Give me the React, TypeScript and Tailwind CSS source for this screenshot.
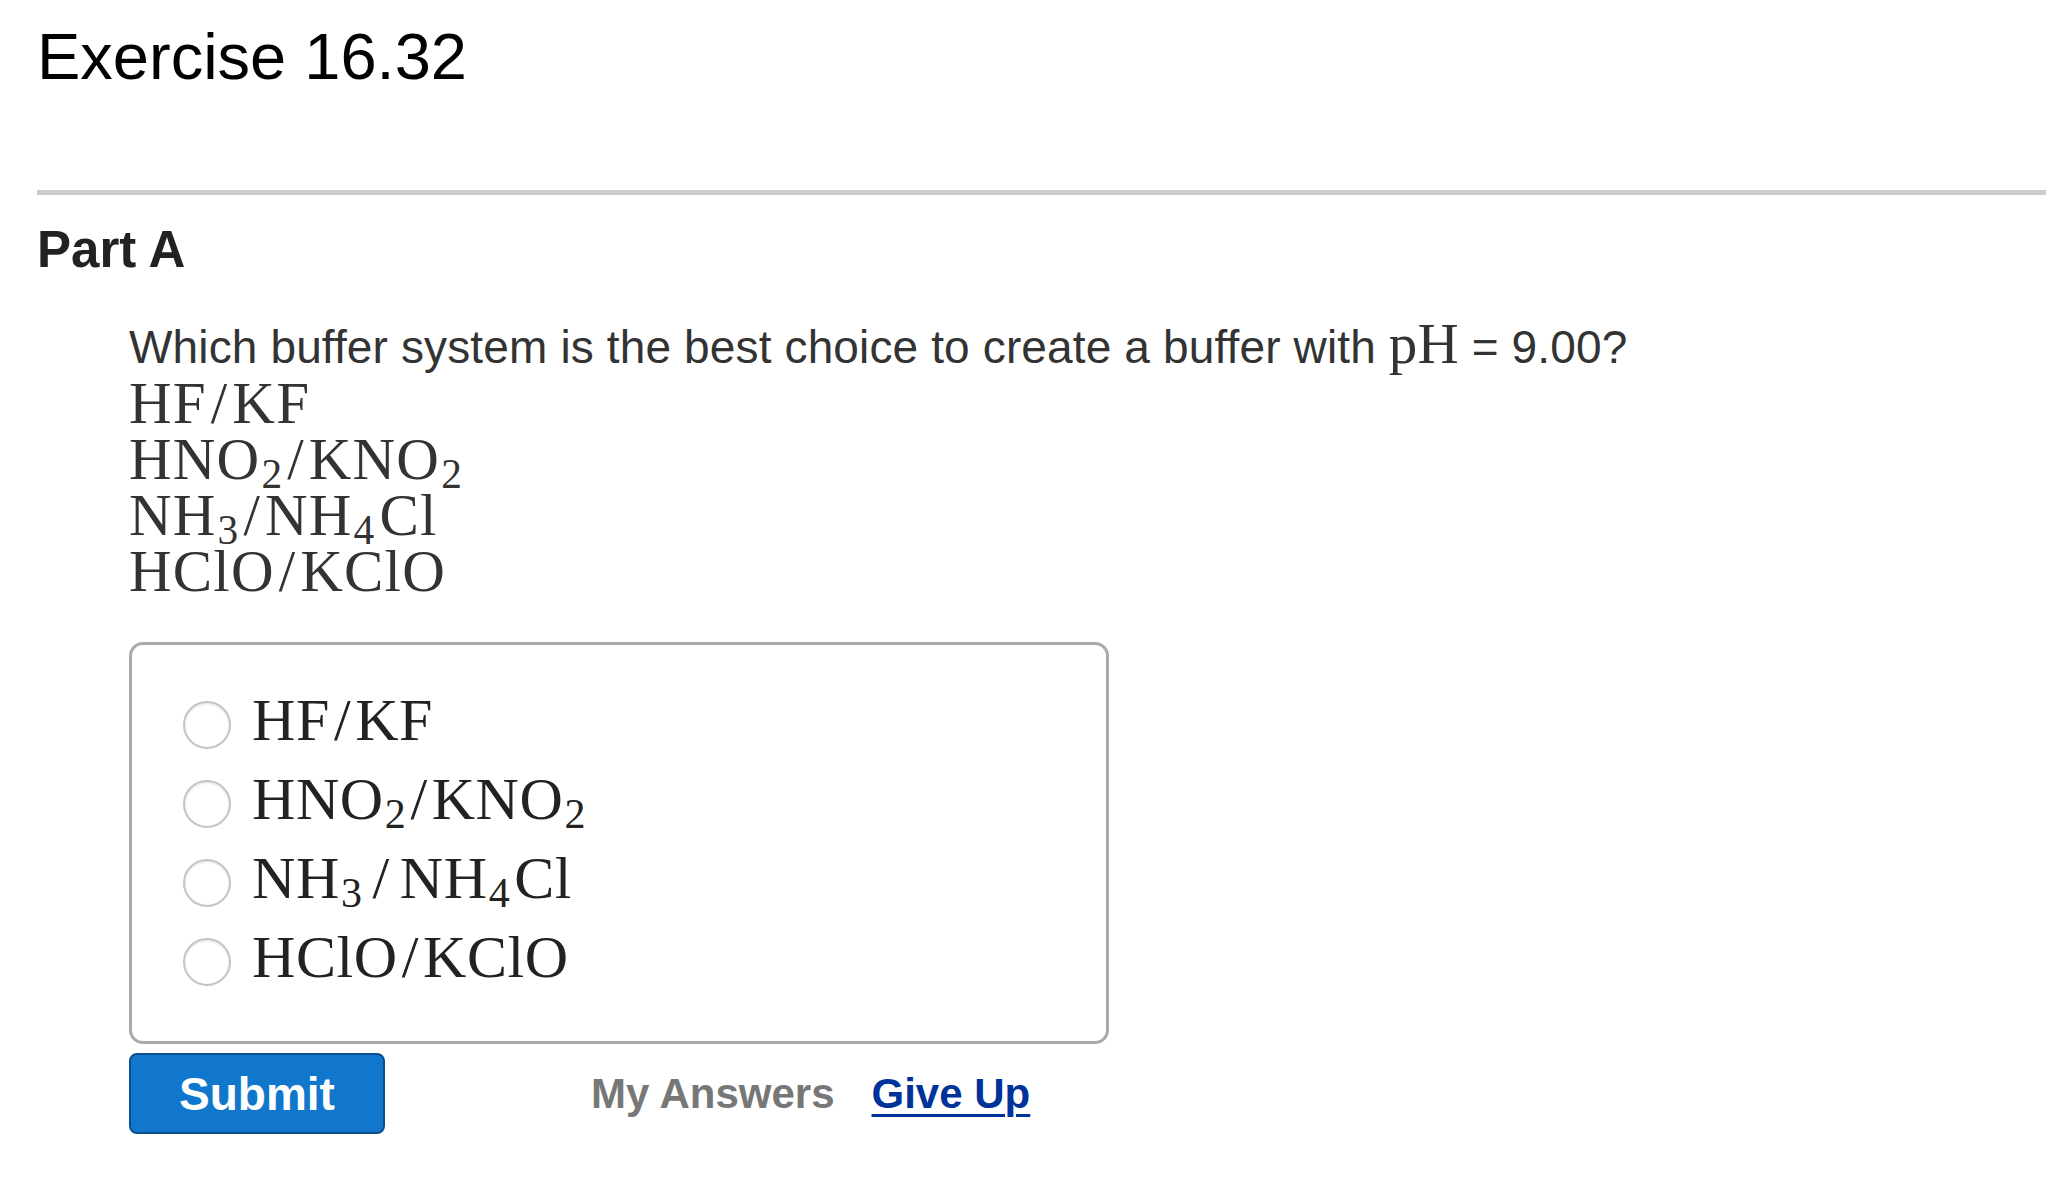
import React from 'react'

const sans = "font-['Liberation_Sans','Helvetica','Arial',sans-serif]"
const serif = "font-['Liberation_Serif','Times_New_Roman',serif]"

type Part = { t: string; sub?: string; gap?: boolean }

const formulas: Part[][] = [
  [{ t: 'HF' }, { t: '/' }, { t: 'KF' }],
  [{ t: 'HNO', sub: '2' }, { t: '/' }, { t: 'KNO', sub: '2' }],
  [{ t: 'NH', sub: '3' }, { t: '/', gap: true }, { t: 'NH', sub: '4' }, { t: 'Cl', gap: true }],
  [{ t: 'HClO' }, { t: '/' }, { t: 'KClO' }],
]

function Formula({ parts, wide }: { parts: Part[]; wide?: boolean }) {
  return (
    <>
      {parts.map((p, i) => {
        let cls = ''
        if (p.t === '/') cls = p.gap && wide ? 'px-[10px]' : 'px-[4px]'
        else if (p.gap) cls = 'pl-[4px]'
        return (
          <span key={i} className={cls}>
            {p.t}
            {p.sub && <sub className="text-[0.7em] leading-none -bottom-[0.22em] pl-[1px]">{p.sub}</sub>}
          </span>
        )
      })}
    </>
  )
}

function Radio() {
  return (
    <span className="w-[48px] h-[48px] shrink-0 rounded-full border-2 border-[#c4c4c4] bg-white shadow-[inset_0_1px_2px_rgba(0,0,0,0.12)]" />
  )
}

export default function App() {
  return (
    <div className={`min-h-screen bg-white ${sans} pl-[37px] pt-[17px]`}>
      {/* Title */}
      <h1 className="text-[65px] leading-[80px] text-black font-normal">Exercise 16.32</h1>

      <div className="mt-[93px] h-[5px] bg-[#cccccc]" />

      <h2 className="mt-[25px] text-[51px] leading-[60px] font-bold text-[#222]">Part A</h2>

      <div className="pl-[92px]">
        {/* Question */}
        <p className="mt-[35px] text-[46px] leading-[56px] text-[#333] tracking-[0.003em]">
          Which buffer system is the best choice to create a buffer with{' '}
          <span className={`${serif} text-[57px] leading-none`}>pH</span> = 9.00?
        </p>

        <div className={`${serif} text-[59px] leading-[56px] text-[#333] tracking-[0.02em]`}>
          {formulas.map((f, i) => (
            <div key={i}>
              <Formula parts={f} />
            </div>
          ))}
        </div>

        {/* Answer box */}
        <div className="mt-[43px] w-[980px] h-[402px] border-[3px] border-[#aaaaaa] rounded-[14px] pt-[40px] pl-[51px]">
          {formulas.map((f, i) => (
            <label key={i} className="flex items-center h-[79px] gap-[21px]">
              <Radio />
              <span className={`${serif} text-[60px] leading-none pb-[10px] text-[#222] tracking-[0.01em]`}>
                <Formula parts={f} wide />
              </span>
            </label>
          ))}
        </div>

        {/* Actions */}
        <div className="mt-[9px] flex items-center">
          <button
            type="button"
            className="w-[256px] h-[81px] rounded-[8px] bg-[#1077cc] border-2 border-[#0a4f8c] text-white text-[46px] font-bold leading-none"
          >
            Submit
          </button>
          <span className="ml-[206px] text-[42px] font-bold text-[#777] leading-none">My Answers</span>
          <a
            href="#"
            className="ml-[37px] text-[42px] font-bold text-[#003399] leading-none underline decoration-[3px] underline-offset-[6px]"
          >
            Give Up
          </a>
        </div>
      </div>
    </div>
  )
}
